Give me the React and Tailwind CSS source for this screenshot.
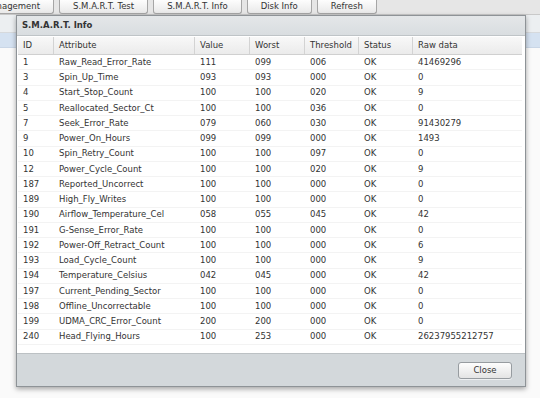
const rows = [
  ["1", "Raw_Read_Error_Rate", "111", "099", "006", "OK", "41469296"],
  ["3", "Spin_Up_Time", "093", "093", "000", "OK", "0"],
  ["4", "Start_Stop_Count", "100", "100", "020", "OK", "9"],
  ["5", "Reallocated_Sector_Ct", "100", "100", "036", "OK", "0"],
  ["7", "Seek_Error_Rate", "079", "060", "030", "OK", "91430279"],
  ["9", "Power_On_Hours", "099", "099", "000", "OK", "1493"],
  ["10", "Spin_Retry_Count", "100", "100", "097", "OK", "0"],
  ["12", "Power_Cycle_Count", "100", "100", "020", "OK", "9"],
  ["187", "Reported_Uncorrect", "100", "100", "000", "OK", "0"],
  ["189", "High_Fly_Writes", "100", "100", "000", "OK", "0"],
  ["190", "Airflow_Temperature_Cel", "058", "055", "045", "OK", "42"],
  ["191", "G-Sense_Error_Rate", "100", "100", "000", "OK", "0"],
  ["192", "Power-Off_Retract_Count", "100", "100", "000", "OK", "6"],
  ["193", "Load_Cycle_Count", "100", "100", "000", "OK", "9"],
  ["194", "Temperature_Celsius", "042", "045", "000", "OK", "42"],
  ["197", "Current_Pending_Sector", "100", "100", "000", "OK", "0"],
  ["198", "Offline_Uncorrectable", "100", "100", "000", "OK", "0"],
  ["199", "UDMA_CRC_Error_Count", "200", "200", "000", "OK", "0"],
  ["240", "Head_Flying_Hours", "100", "253", "000", "OK", "26237955212757"],
];

const cols = [
  { label: "ID", w: "w-[36px]" },
  { label: "Attribute", w: "w-[141px]" },
  { label: "Value", w: "w-[55px]" },
  { label: "Worst", w: "w-[55px]" },
  { label: "Threshold", w: "w-[54px]" },
  { label: "Status", w: "w-[54px]" },
  { label: "Raw data", w: "w-[109px]" },
];

const ToolButton = ({ children, className = "" }) => (
  <div
    className={`h-[14px] px-[13px] flex items-center border border-t-0 border-[#a6a6a6] rounded-b-[3px] bg-gradient-to-b from-[#fdfdfd] to-[#e9e9e9] whitespace-nowrap ${className}`}
  >
    {children}
  </div>
);

export default function App() {
  return (
    <div className="relative w-[540px] h-[398px] overflow-hidden bg-[#fafafa] font-['DejaVu_Sans',sans-serif] text-[8.5px] text-[#333]">
      {/* toolbar */}
      <div className="h-[15px] bg-[#e6e6e6] border-b border-[#c9c9c9] flex items-start gap-[5px]">
        <ToolButton className="-ml-[30px]">Management</ToolButton>
        <ToolButton>S.M.A.R.T. Test</ToolButton>
        <ToolButton>S.M.A.R.T. Info</ToolButton>
        <ToolButton>Disk Info</ToolButton>
        <ToolButton>Refresh</ToolButton>
      </div>

      {/* grid behind the dialog */}
      <div className="h-[18px] bg-[#eceff1] border-b border-[#d6d9dc]" />
      <div className="h-[15px] bg-[#d5e2f1] border-b border-[#c9d6e6]" />

      {/* dialog */}
      <div className="absolute left-[16px] top-[15px] w-[510px] h-[372px] flex flex-col border border-[#8e9397] shadow-[0_2px_5px_rgba(0,0,0,0.35)]">
        <div className="h-[20px] shrink-0 bg-gradient-to-b from-[#e4e7e9] to-[#d9dde0] border-b border-[#bfc4c7] pl-[5px] flex items-center font-bold">
          S.M.A.R.T. Info
        </div>

        <div className="flex-1 bg-white px-[1px] pt-[1px]">
          <div className="w-[504px]">
            <div className="h-[18px] flex bg-gradient-to-b from-[#f8f8f8] to-[#ebebeb] border-b border-[#d0d0d0]">
              {cols.map((c, i) => (
                <div
                  key={c.label}
                  className={`${c.w} pl-[5px] flex items-center ${i < cols.length - 1 ? "border-r border-[#d3d3d3]" : ""}`}
                >
                  {c.label}
                </div>
              ))}
            </div>
            {rows.map((r) => (
              <div key={r[0]} className="h-[15.25px] flex border-b border-[#f3f3f3]">
                {r.map((v, i) => (
                  <div key={i} className={`${cols[i].w} pl-[5px] flex items-center whitespace-nowrap`}>
                    {v}
                  </div>
                ))}
              </div>
            ))}
          </div>
        </div>

        <div className="h-[33px] shrink-0 bg-[#d3d8db] border-t border-[#bcc1c4] flex items-center justify-end pr-[13px]">
          <div className="w-[54px] h-[17px] flex items-center justify-center border border-[#979ca0] rounded-[3px] bg-gradient-to-b from-[#fdfdfd] to-[#e4e4e4] shadow-[0_1px_0_rgba(255,255,255,0.6)]">
            Close
          </div>
        </div>
      </div>
    </div>
  );
}
